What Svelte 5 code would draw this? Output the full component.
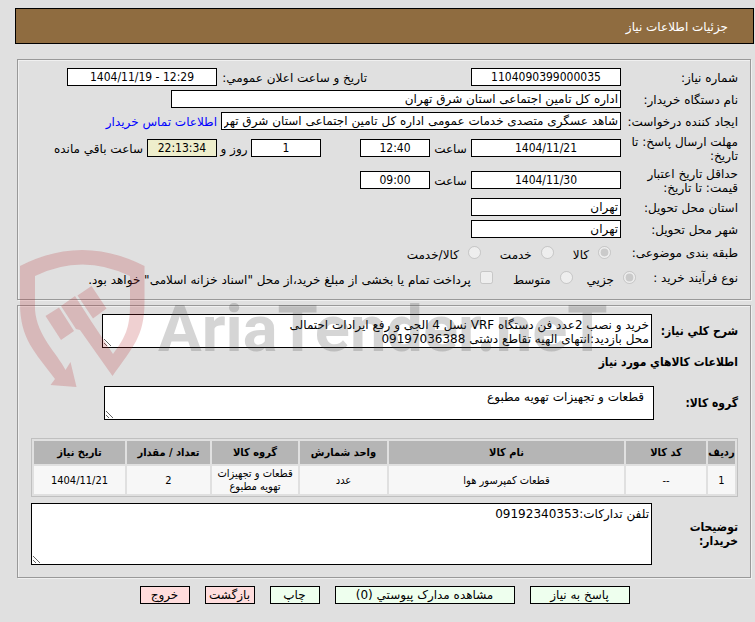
<script>
  const kinds = ['کالا', 'خدمت', 'کالا/خدمت'];
  const processes = ['جزیي', 'متوسط'];
  const columns = [
    { title: 'ردیف', value: '1', width: '27px' },
    { title: 'کد کالا', value: '--', width: '80px' },
    { title: 'نام کالا', value: 'قطعات کمپرسور هوا', width: 'auto' },
    { title: 'واحد شمارش', value: 'عدد', width: '87px' },
    { title: 'گروه کالا', value: 'قطعات و تجهیزات تهویه مطبوع', width: '86px' },
    { title: 'تعداد / مقدار', value: '2', width: '83px' },
    { title: 'تاریخ نیاز', value: '1404/11/21', width: '91px' }
  ];
  const actions = [
    { text: 'پاسخ به نیاز', size: 'medium', tone: 'go' },
    { text: 'مشاهده مدارک پیوستي (0)', size: 'large', tone: 'go' },
    { text: 'چاپ', size: 'small', tone: 'go' },
    { text: 'بازگشت', size: 'small', tone: 'leave' },
    { text: 'خروج', size: 'small', tone: 'leave' }
  ];
  const description = 'خرید و نصب 2عدد فن دستگاه VRF نسل 4 الجی و رفع ایرادات احتمالی\nمحل بازدید:انتهای الهیه تقاطع دشتی 09197036388';
  const group = 'قطعات و تجهیزات تهویه مطبوع';
  const notes = 'تلفن تدارکات:09192340353';
</script>

<main class="page" dir="rtl">
  <h1>جزئیات اطلاعات نیاز</h1>

  <section class="panel">
    <div class="row">
      <label class="name" for="number">شماره نیاز:</label>
      <input class="date" id="number" value="1104090399000035" readonly />
      <div class="announce">
        <label for="announced">تاریخ و ساعت اعلان عمومي:</label>
        <input class="date" id="announced" dir="ltr" value="1404/11/19 - 12:29" readonly />
      </div>
    </div>
    <div class="row">
      <label class="name" for="buyer">نام دستگاه خریدار:</label>
      <input class="buyer" id="buyer" value="اداره کل تامین اجتماعی استان شرق تهران" readonly />
    </div>
    <div class="row">
      <label class="name" for="creator">ایجاد کننده درخواست:</label>
      <input class="creator" id="creator" value="شاهد عسگری متصدی خدمات عمومی اداره کل تامین اجتماعی استان شرق تهران" readonly />
      <a class="contact" href="#contact">اطلاعات تماس خریدار</a>
    </div>
    <div class="row tall">
      <label class="name" for="deadline">مهلت ارسال پاسخ: تا<br />تاریخ:</label>
      <input class="date" id="deadline" value="1404/11/21" readonly />
      <label class="hour" for="deadline-time">ساعت</label>
      <input class="time" id="deadline-time" value="12:40" readonly />
      <input class="time days" id="days" value="1" readonly />
      <label class="and" for="days">روز و</label>
      <input class="time left" id="remaining" value="22:13:34" readonly />
      <label class="remaining" for="remaining">ساعت باقي مانده</label>
    </div>
    <div class="row tall">
      <label class="name" for="validity">حداقل تاریخ اعتبار<br />قیمت: تا تاریخ:</label>
      <input class="date" id="validity" value="1404/11/30" readonly />
      <label class="hour" for="validity-time">ساعت</label>
      <input class="time" id="validity-time" value="09:00" readonly />
    </div>
    <div class="row">
      <label class="name" for="province">استان محل تحویل:</label>
      <input class="place" id="province" value="تهران" readonly />
    </div>
    <div class="row">
      <label class="name" for="city">شهر محل تحویل:</label>
      <input class="place" id="city" value="تهران" readonly />
    </div>
    <div class="row choices">
      <span class="name">طبقه بندی موضوعی:</span>
      <div class="options kinds">
        {#each kinds as kind, i}
          <label><input type="radio" name="kind" checked={i === 0} disabled /><span>{kind}</span></label>
        {/each}
      </div>
    </div>
    <div class="row choices">
      <span class="name short">نوع فرآیند خرید :</span>
      <div class="options">
        {#each processes as process, i}
          <label><input type="radio" name="process" checked={i === 0} disabled /><span>{process}</span></label>
        {/each}
        <label class="treasury"><input type="checkbox" disabled /><span>پرداخت تمام یا بخشی از مبلغ خرید،از محل "اسناد خزانه اسلامی" خواهد بود.</span></label>
      </div>
    </div>
  </section>

  <section class="panel goods">
    <div class="line">
      <label for="description">شرح کلي نیاز:</label>
      <textarea id="description" readonly value={description}></textarea>
    </div>
    <h2>اطلاعات کالاهاي مورد نیاز</h2>
    <div class="line group">
      <label for="group">گروه کالا:</label>
      <textarea id="group" readonly value={group}></textarea>
    </div>
    <table>
      <colgroup>
        {#each columns as column}<col style="width: {column.width}" />{/each}
      </colgroup>
      <thead>
        <tr>{#each columns as column}<th>{column.title}</th>{/each}</tr>
      </thead>
      <tbody>
        <tr>{#each columns as column}<td>{column.value}</td>{/each}</tr>
      </tbody>
    </table>
    <div class="line notes">
      <label for="notes">توضیحات<br />خریدار:</label>
      <textarea id="notes" readonly value={notes}></textarea>
    </div>
  </section>

  <div class="actions">
    {#each actions as action}
      <button type="button" class="{action.size} {action.tone}">{action.text}</button>
    {/each}
  </div>

  <svg class="watermark" width="595" height="150" viewBox="0 0 595 150" aria-hidden="true">
    <g fill="#b6292e" fill-opacity="0.22">
      <path d="M5 26Q67 -6 129.500 26V62C129.500 96 118 107 97.500 136L65 90L61 89L46 66L60 56L76 81L98 114C110 98 115 88 115 65V36Q67 13 20 36V70C22 96 42 113 50.500 130L55.500 122L61.500 147L35.500 145L40 139C20 112 5 99 5 63Z" />
      <path d="M30.500 76L44 67.500L59 91L46 100Z" />
      <path d="M62.500 55.500L76.500 46L91.500 68.500L78 78.500Z" />
    </g>
    <text x="143" y="111">AriaTender.neT</text>
  </svg>
</main>

<style>
  :global(body) {
    background: #e0e0e0;
  }
  .page {
    position: relative;
    padding: 8px 1px 18px 15px;
    color: #000;
    font: 12px/14px "DejaVu Sans", sans-serif;
  }
  h1 {
    display: flex;
    align-items: center;
    height: 36px;
    box-sizing: border-box;
    margin: 0 0 15px;
    padding: 2px 25px 0;
    border: 1px solid #000;
    background: #8f6c40;
    color: #fff;
    font-size: 12px;
    font-weight: normal;
  }
  .panel {
    margin: 0 3px 5px 2px;
    padding: 6px 12px 9px 13px;
    border: 1px solid #999;
    box-shadow: 1px 1px 0 #f0f0f0, inset 1px 1px 0 #f0f0f0;
  }
  .row {
    display: flex;
    align-items: center;
    height: 22px;
    white-space: nowrap;
  }
  .tall {
    height: 32px;
  }
  .choices {
    height: 25px;
  }
  .row > label,
  .announce label,
  .contact {
    padding-top: 1px;
  }
  .name {
    flex: none;
    width: 117px;
  }
  .short {
    width: 102px;
  }
  input,
  textarea {
    box-sizing: border-box;
    margin: 0;
    border: 1px solid #000;
    border-radius: 0;
    background: #fff;
    color: #000;
    font: inherit;
  }
  .row > input,
  .announce input {
    flex: none;
    height: 18px;
    padding: 0 2px;
  }
  .date,
  .time {
    font-family: "DejaVu Sans Condensed", "DejaVu Sans", sans-serif;
    text-align: center;
  }
  .date,
  .place {
    width: 150px;
  }
  .buyer {
    width: 450px;
  }
  .creator {
    width: 400px;
  }
  .time {
    width: 70px;
  }
  .announce {
    display: flex;
    align-items: center;
    justify-content: space-between;
    width: 300px;
    margin-right: 104px;
  }
  .contact {
    margin-right: 4px;
    color: #00f;
    text-decoration: none;
  }
  .hour {
    width: 41px;
    text-align: center;
  }
  .days {
    margin-right: 39px;
  }
  .and {
    width: 34px;
    text-align: center;
  }
  .left {
    background: #eeeecc;
  }
  .remaining {
    margin-right: 4px;
  }
  .options,
  .options label {
    display: flex;
    align-items: center;
  }
  .options {
    gap: 14px;
  }
  .kinds {
    gap: 19px;
    padding-right: 10px;
  }
  .options label {
    gap: 9px;
  }
  .options input {
    width: 13px;
    height: 13px;
  }
  .options span {
    padding-top: 4px;
  }
  .options .treasury {
    margin-right: 6px;
  }
  .goods {
    margin-bottom: 8px;
    padding-top: 8px;
    padding-bottom: 12px;
  }
  .line {
    display: flex;
    align-items: center;
  }
  .line label,
  h2,
  th {
    font-family: "DejaVu Sans Condensed", "DejaVu Sans", sans-serif;
    font-weight: bold;
  }
  .line label {
    flex: none;
    width: 86px;
  }
  textarea {
    display: block;
    width: 550px;
    height: 34px;
    padding: 3px 2px;
    overflow: hidden;
    resize: both;
  }
  h2 {
    margin: 7px 0 17px;
    font-size: 12px;
  }
  .group label {
    width: 84px;
  }
  .group textarea {
    padding: 3px 9px;
  }
  table {
    width: 100%;
    margin: 18px 0 6px;
    border: 1px solid #c0c0c0;
    border-spacing: 2px;
    table-layout: fixed;
    font-family: "DejaVu Sans Condensed", "DejaVu Sans", sans-serif;
    font-size: 11px;
    line-height: 13px;
  }
  th,
  td {
    padding: 0;
    text-align: center;
    vertical-align: middle;
  }
  th {
    height: 23px;
    background: #b5b5b5;
  }
  td {
    height: 28px;
    background: #f7f7f7;
  }
  .notes textarea {
    flex: 1;
    height: 62px;
  }
  .actions {
    display: flex;
    justify-content: center;
    gap: 15px;
  }
  button {
    height: 18px;
    padding: 0;
    border: 1px solid #000;
    color: #000;
    font: inherit;
    white-space: nowrap;
  }
  .small {
    width: 50px;
  }
  .medium {
    width: 100px;
  }
  .large {
    width: 180px;
  }
  .go {
    background: #eeffee;
  }
  .leave {
    background: #ffdddd;
  }
  .watermark {
    position: absolute;
    top: 240px;
    left: 15px;
    pointer-events: none;
  }
  .watermark text {
    direction: ltr;
    fill: #404040;
    fill-opacity: 0.22;
    font: bold 65px Roboto, "Liberation Sans", sans-serif;
  }
</style>
